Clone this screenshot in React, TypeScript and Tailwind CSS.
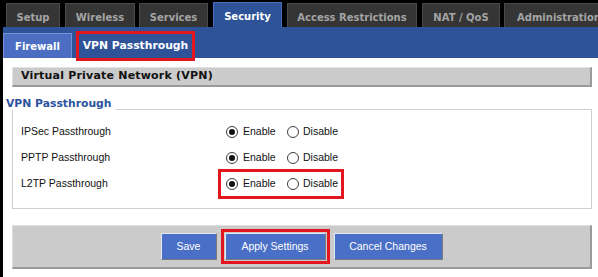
const tabs = [
  { name: "Setup", w: "w-[54px]", gap: "" },
  { name: "Wireless", w: "w-[70px]", gap: "ml-[5px]" },
  { name: "Services", w: "w-[69px]", gap: "ml-[4px]" },
  { name: "Security", w: "w-[69px]", gap: "ml-[5px]", active: true },
  { name: "Access Restrictions", w: "w-[130px]", gap: "ml-[5px]" },
  { name: "NAT / QoS", w: "w-[78px]", gap: "ml-[5px]" },
  { name: "Administration", w: "w-[110px]", gap: "ml-[4px]" },
]

const rows = [
  { label: "IPSec Passthrough", marked: false },
  { label: "PPTP Passthrough", marked: false },
  { label: "L2TP Passthrough", marked: true },
]

function Radio({ checked }: { checked?: boolean }) {
  return (
    <span className="flex h-[12px] w-[12px] shrink-0 items-center justify-center rounded-full border border-[#3c3c3c] bg-white">
      {checked && <span className="h-[6px] w-[6px] rounded-full bg-[#111]" />}
    </span>
  )
}

function Button({ label, w }: { label: string; w: string }) {
  return (
    <button
      className={`${w} h-[27px] border border-t-[#e4e8f4] border-l-[#e4e8f4] border-r-[#7a7a7a] border-b-[#7a7a7a] bg-[#4a6fc6] text-[10.5px] text-white`}
    >
      {label}
    </button>
  )
}

export default function App() {
  return (
    <div className="h-[277px] w-[598px] overflow-hidden bg-black font-['Liberation_Sans',Arial,sans-serif]">
      {/* main tabs */}
      <div className="flex h-[27px] items-end pl-[6px] font-['DejaVu_Sans',Verdana,sans-serif] text-[10px] font-bold">
        {tabs.map((t) =>
          t.active ? (
            <div
              key={t.name}
              className={`${t.w} ${t.gap} flex h-[25px] shrink-0 items-center justify-center border border-b-0 border-[#4a6cbf] bg-[#2e5399] pt-[3px] text-white`}
            >
              {t.name}
            </div>
          ) : (
            <div
              key={t.name}
              className={`${t.w} ${t.gap} flex h-[24px] shrink-0 items-center justify-center border border-b-0 border-[#4a4a4a] bg-[#353535] pt-[3px] text-[#a4a4a4]`}
            >
              {t.name}
            </div>
          )
        )}
      </div>

      {/* sub tabs */}
      <div className="ml-[3px] flex h-[31px] items-end bg-[#2e5399] font-['DejaVu_Sans',Verdana,sans-serif] font-bold text-white">
        <div className="flex h-[25px] w-[69px] items-center justify-center border border-b-0 border-[#7390d8] bg-[#4b6ec3] text-[10px]">
          Firewall
        </div>
        <div className="relative z-10 -mb-[3px] ml-[4px] border-[3px] border-[#e3151f]">
          <div className="flex h-[24px] w-[113px] items-center justify-center text-[10.8px]">
            VPN Passthrough
          </div>
        </div>
      </div>

      {/* content */}
      <div className="ml-[3px] h-[219px] bg-white pt-[9px]">
        <div className="ml-[9px] mr-[6px] flex h-[20px] items-center border-t border-l border-r-2 border-b-2 border-t-[#e2e2e2] border-l-[#e2e2e2] border-r-[#9a9a9a] border-b-[#9a9a9a] bg-[#cbcbcb] pl-[8px] font-['DejaVu_Sans',Verdana,sans-serif] text-[11px] font-bold tracking-[0.2px] text-[#111]">
          Virtual Private Network (VPN)
        </div>

        <div className="mt-[11px] mr-[6px] flex h-[12px] items-center pl-[3px]">
          <span className="pr-[4px] font-['DejaVu_Sans',Verdana,sans-serif] text-[10.8px] leading-[12px] font-bold text-[#2d539e]">
            VPN Passthrough
          </span>
          <div className="h-px flex-1 self-end bg-[#cfcfcf]" />
        </div>

        <div className="ml-[9px] mr-[6px] border-x border-b border-[#cfcfcf] pt-[9px] pb-[11px] text-[10.5px] text-[#111]">
          {rows.map((r) => (
            <div key={r.label} className="flex h-[26px] items-center pl-[8px]">
              <span className="w-[197px]">{r.label}</span>
              <div
                className={`-my-[2px] flex h-[30px] items-center border-[3px] pl-[5px] pr-[3px] ${
                  r.marked ? "border-[#e3151f]" : "border-transparent"
                }`}
              >
                <label className="flex w-[61px] items-center gap-[5px]">
                  <Radio checked />
                  <span>Enable</span>
                </label>
                <label className="flex items-center gap-[4px]">
                  <Radio />
                  <span>Disable</span>
                </label>
              </div>
            </div>
          ))}
        </div>

        <div className="mt-[16px] ml-[9px] mr-[6px] flex h-[44px] items-center justify-center gap-2 border-t border-l border-r-2 border-b-2 border-t-[#dedede] border-l-[#dedede] border-r-[#9a9a9a] border-b-[#9a9a9a] bg-[#cbcbcb]">
          <Button label="Save" w="w-[56px]" />
          <div className="-m-[4px] border-[3px] border-[#e3151f] p-px">
            <Button label="Apply Settings" w="w-[101px]" />
          </div>
          <Button label="Cancel Changes" w="w-[109px]" />
        </div>
      </div>
    </div>
  )
}
